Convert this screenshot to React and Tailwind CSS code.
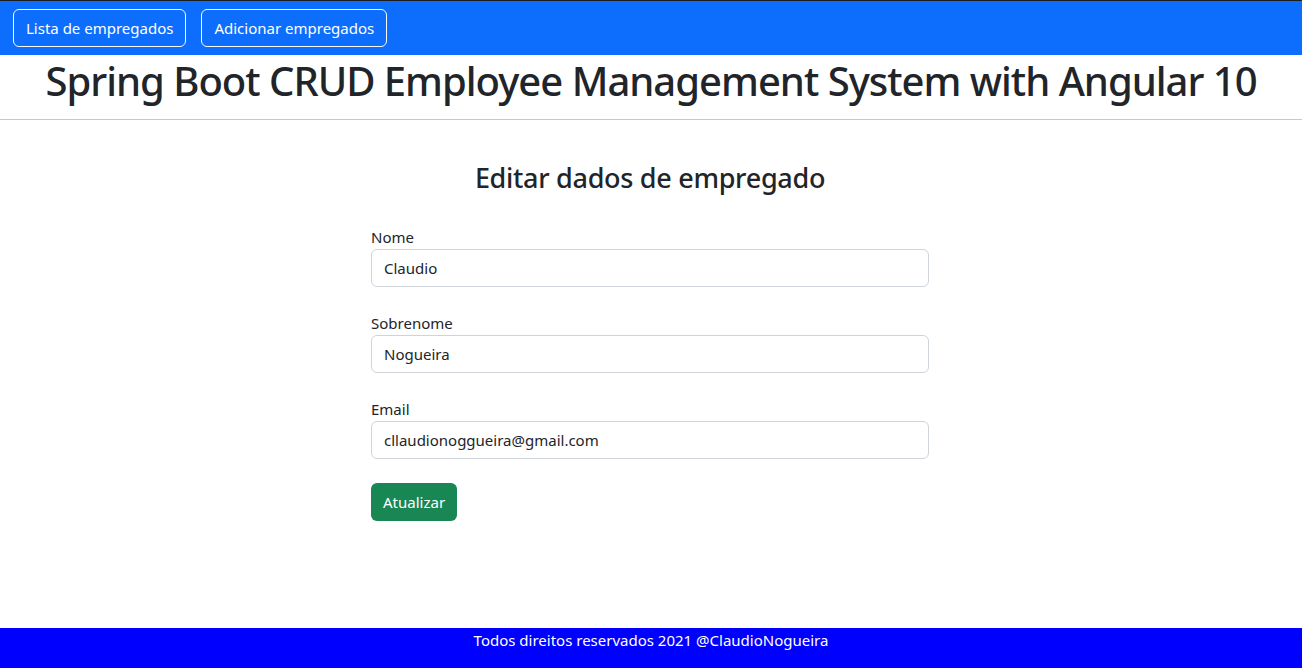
import { useState } from "react";

const fields = [
  { id: "firstName", label: "Nome", value: "Claudio" },
  { id: "lastName", label: "Sobrenome", value: "Nogueira" },
  { id: "email", label: "Email", value: "cllaudionoggueira@gmail.com" },
];

export default function App() {
  const [form, setForm] = useState(
    Object.fromEntries(fields.map((f) => [f.id, f.value]))
  );

  const handleChange = (e) => {
    const { name, value } = e.target;
    setForm((prev) => ({ ...prev, [name]: value }));
  };

  return (
    <div className="min-h-screen flex flex-col bg-white text-[#212529] font-['Noto_Sans',sans-serif]">
      {/* Navbar */}
      <nav className="border-t border-[#1e1e1e] bg-[#0d6efd] px-[13px] py-2 flex gap-[15px]">
        <button className="h-[38px] px-3 rounded-[6px] border border-[#f8f9fa] text-white text-[15px] leading-6">
          Lista de empregados
        </button>
        <button className="h-[38px] px-3 rounded-[6px] border border-[#f8f9fa] text-white text-[15px] leading-6">
          Adicionar empregados
        </button>
      </nav>

      {/* Header */}
      <div className="h-[65px] border-b border-[#c8c8c8]">
        <h1 className="text-center text-[40px] leading-[52px] font-medium tracking-[-1px]">
          Spring Boot CRUD Employee Management System with Angular 10
        </h1>
      </div>

      {/* Form */}
      <main className="flex-1">
        <div className="w-[558px] mx-auto pt-[40px] -translate-x-[1px]">
          <h2 className="text-center text-[27px] leading-[36px] font-medium mb-[29px] tracking-[-0.3px]">
            Editar dados de empregado
          </h2>
          <form onSubmit={(e) => e.preventDefault()}>
            {fields.map((f) => (
              <div key={f.id} className="mb-6">
                <label htmlFor={f.id} className="block text-[15px] leading-6">
                  {f.label}
                </label>
                <input
                  id={f.id}
                  name={f.id}
                  value={form[f.id]}
                  onChange={handleChange}
                  className="w-full h-[38px] px-3 rounded-[6px] border border-[#ced4da] text-[15px] text-[#212529] outline-none"
                />
              </div>
            ))}
            <button
              type="submit"
              className="h-[38px] px-3 rounded-[6px] bg-[#198754] text-white text-[15px] leading-6"
            >
              Atualizar
            </button>
          </form>
        </div>
      </main>

      {/* Footer */}
      <footer className="h-[40px] bg-[#0000ff] text-white text-center text-[15px] leading-6">
        Todos direitos reservados 2021 @ClaudioNogueira
      </footer>
    </div>
  );
}
